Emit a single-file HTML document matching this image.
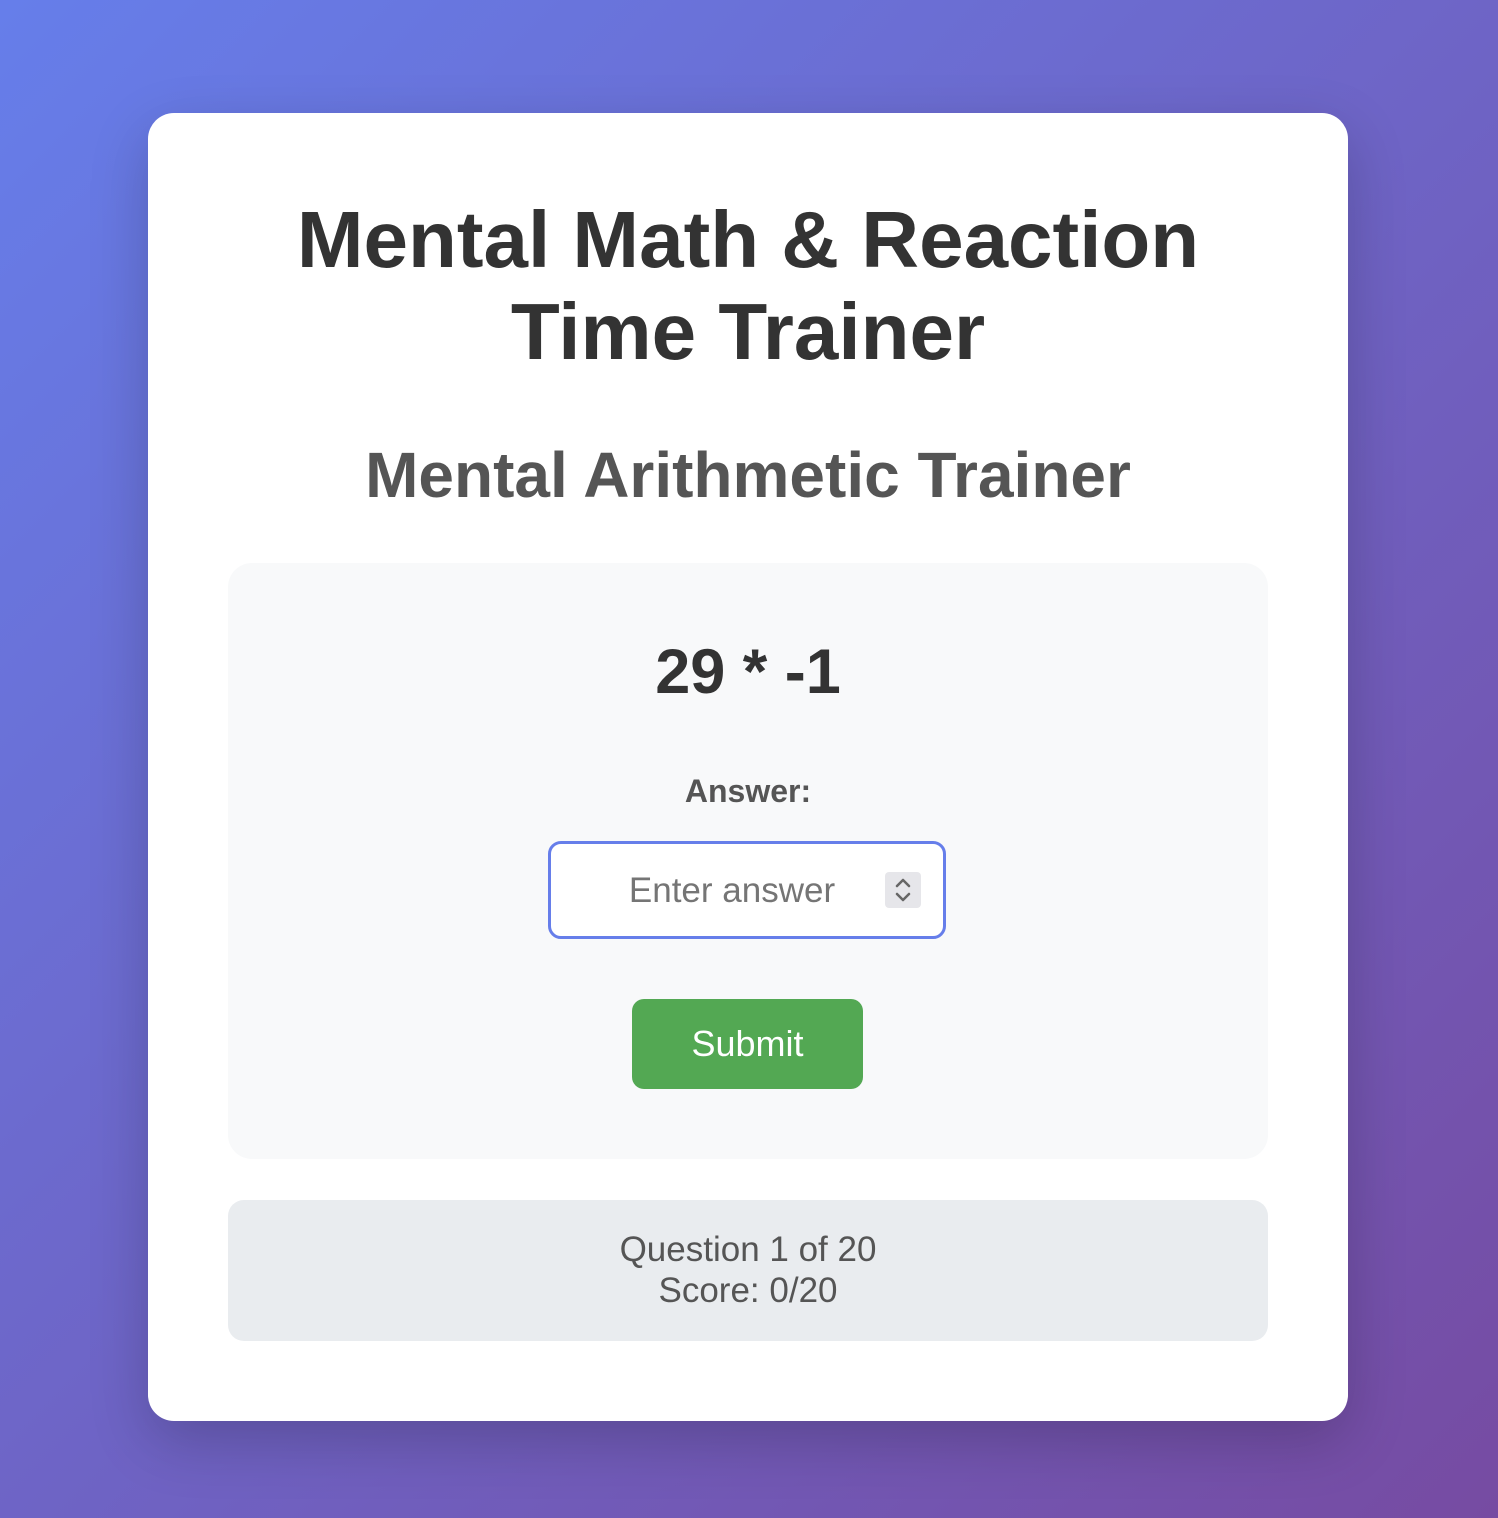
<!DOCTYPE html>
<html><head><style>
html,body{margin:0;padding:0;}
body{width:1498px;height:1518px;background:linear-gradient(135deg,#667eea 0%,#764ba2 100%);font-family:"Liberation Sans",Arial,sans-serif;position:relative;overflow:hidden;}
.card{position:absolute;left:148px;top:113px;width:1200px;height:1308px;background:#fff;border-radius:26px;box-shadow:0 20px 60px rgba(0,0,0,0.2);}
.t{position:absolute;left:0;width:1200px;text-align:center;}
h1{margin:0;font-size:80px;line-height:92px;font-weight:bold;color:#333;}
h2{margin:0;font-size:64px;font-weight:bold;color:#555;line-height:74px;}
.box{position:absolute;left:80px;top:450px;width:1040px;height:596px;background:#f8f9fa;border-radius:24px;}
.q{position:absolute;left:0;width:1040px;text-align:center;top:71px;font-size:63px;font-weight:bold;color:#333;line-height:76px;}
.lab{position:absolute;left:0;width:1040px;text-align:center;top:208px;font-size:32px;font-weight:bold;color:#555;line-height:40px;}
.inp{position:absolute;left:320px;top:278px;width:392px;height:92px;border:3px solid #667eea;border-radius:13px;background:#fff;}
.ph{position:absolute;left:0;width:362px;text-align:center;top:26px;font-size:35px;color:#757575;line-height:42px;}
.spin{position:absolute;left:334px;top:28px;width:36px;height:36px;background:#e6e6ea;border-radius:4px;}
.btn{position:absolute;left:404px;top:436px;width:231px;height:90px;background:#53a853;border-radius:12px;color:#fff;font-size:36px;line-height:90px;text-align:center;}
.stats{position:absolute;left:80px;top:1087px;width:1040px;height:141px;background:#e9ecef;border-radius:16px;text-align:center;font-size:35px;color:#555;line-height:41px;}
</style></head><body>
<div class="card">
<div class="t" style="top:81px"><h1>Mental Math &amp; Reaction<br>Time Trainer</h1></div>
<div class="t" style="top:325px"><h2>Mental Arithmetic Trainer</h2></div>
<div class="box">
<div class="q">29 * -1</div>
<div class="lab">Answer:</div>
<div class="inp"><div class="ph">Enter answer</div>
<div class="spin"><svg width="36" height="36" viewBox="0 0 36 36"><path d="M12 14l6-6 6 6M12 22l6 6 6-6" fill="none" stroke="#666" stroke-width="2.5" stroke-linecap="round" stroke-linejoin="round"/></svg></div></div>
<div class="btn">Submit</div>
</div>
<div class="stats"><div style="padding-top:29px">Question 1 of 20<br>Score: 0/20</div></div>
</div>
</body></html>
